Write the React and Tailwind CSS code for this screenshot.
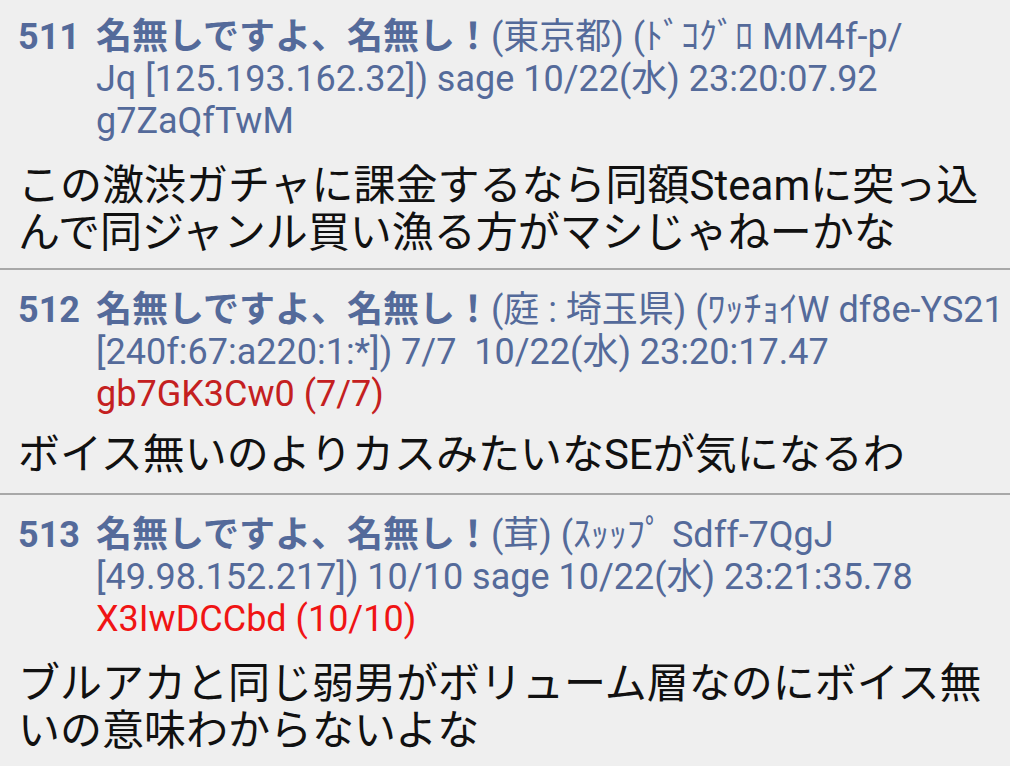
import React from "react";

const posts = [
  {
    no: "511",
    head: [
      <>
        <span className="font-bold">名無しですよ、名無し！</span>(東京都) (ﾄﾞｺｸﾞﾛ MM4f-p/
      </>,
      <>Jq [125.193.162.32]) sage 10/22(水) 23:20:07.92</>,
      <>g7ZaQfTwM</>,
    ],
    body: ["この激渋ガチャに課金するなら同額Steamに突っ込", "んで同ジャンル買い漁る方がマシじゃねーかな"],
    gap: "mt-[20px]",
    pad: "pt-[16px] pb-[12px]",
  },
  {
    no: "512",
    head: [
      <>
        <span className="font-bold">名無しですよ、名無し！</span>(庭 : 埼玉県) (ﾜｯﾁｮｲW df8e-YS21
      </>,
      <>[240f:67:a220:1:*]) 7/7&nbsp; 10/22(水) 23:20:17.47</>,
      <span className="text-[#c42020]">gb7GK3Cw0 (7/7)</span>,
    ],
    body: ["ボイス無いのよりカスみたいなSEが気になるわ"],
    gap: "mt-[16px]",
    pad: "pt-[19px] pb-[15px]",
  },
  {
    no: "513",
    head: [
      <>
        <span className="font-bold">名無しですよ、名無し！</span>(茸) (ｽｯｯﾌﾟ Sdff-7QgJ
      </>,
      <>[49.98.152.217]) 10/10 sage 10/22(水) 23:21:35.78</>,
      <span className="text-[#f01414]">X3IwDCCbd (10/10)</span>,
    ],
    body: ["ブルアカと同じ弱男がボリューム層なのにボイス無", "いの意味わからないよな"],
    gap: "mt-[20px]",
    pad: "pt-[19px] pb-[12px]",
  },
];

export default function App() {
  return (
    <div
      className="w-[1010px] h-[766px] overflow-hidden bg-[#efefef]"
      style={{ fontFamily: 'Roboto, "Noto Sans CJK JP", sans-serif' }}
    >
      {posts.map((p, i) => (
        <div
          key={p.no}
          className={
            "px-[18px] " +
            p.pad +
            (i < posts.length - 1 ? " border-b-[2px] border-[#a8a8a8]" : "")
          }
        >
          <div className="flex text-[36px] leading-[42px] text-[#546a9a] whitespace-nowrap">
            <div className="w-[78px] shrink-0 font-bold">{p.no}</div>
            <div>
              {p.head.map((h, j) => (
                <div key={j}>{h}</div>
              ))}
            </div>
          </div>
          <div className={p.gap + " text-[42px] leading-[47px] text-[#111111] whitespace-nowrap"}>
            {p.body.map((b, j) => (
              <div key={j}>{b}</div>
            ))}
          </div>
        </div>
      ))}
    </div>
  );
}
